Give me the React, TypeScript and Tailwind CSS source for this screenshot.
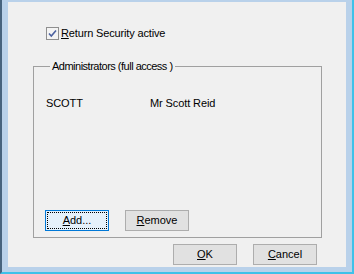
import React from 'react'

const font = { fontFamily: '"Liberation Sans", Arial, sans-serif' }

function Button({
    children,
    focused = false,
    className = '',
}: {
    children: React.ReactNode
    focused?: boolean
    className?: string
}) {
    return (
        <button
            className={`relative flex h-[21px] w-[64px] items-center justify-center border text-[11px] leading-[13px] text-black ${
                focused ? 'border-[#0078d7] bg-[#e5f1fb]' : 'border-[#adadad] bg-[#e1e1e1]'
            } ${className}`}
        >
            {focused && <span className="absolute inset-[1px] border border-dotted border-black"></span>}
            <span className="relative">{children}</span>
        </button>
    )
}

export default function App() {
    return (
        <div
            style={font}
            className="h-[274px] w-[354px] border-b-2 border-l-2 border-r-2 border-b-[#3fc1e9] border-l-[#47637e] border-r-[#3fc1e9] bg-[#b9d1ea] pb-[5px] pl-[6px] pr-[6px] pt-[2px]"
        >
            <div className="flex h-full flex-col bg-[#f0f0f0] text-[11px] leading-[13px] text-black">
                <div className="ml-[38px] mt-[25px] flex items-center gap-[2px]">
                    <span className="flex h-[13px] w-[13px] items-center justify-center border border-[#8f8f8f] bg-[#f4f4f4]">
                        <svg width="9" height="9" viewBox="0 0 9 9">
                            <path d="M1 4.5 L3.3 7 L8 1.5" fill="none" stroke="#4c62a0" strokeWidth="1.6" />
                        </svg>
                    </span>
                    <span className="tracking-[-0.15px]">
                        <span className="underline">R</span>eturn Security active
                    </span>
                </div>

                <fieldset className="ml-[25px] mt-[19px] w-[289px] border border-[#a0a0a0] px-[11px] pb-[6px]">
                    <legend className="ml-[5px] px-[2px] leading-[14px] tracking-[-0.5px]">
                        Administrators (full access )
                    </legend>
                    <div className="ml-[1px] mt-[24px] flex tracking-[-0.1px]">
                        <span className="w-[104px]">SCOTT</span>
                        <span>Mr Scott Reid</span>
                    </div>
                    <div className="mt-[100px] flex gap-[16px]">
                        <Button focused>
                            <span className="underline">A</span>dd...
                        </Button>
                        <Button>
                            <span className="underline">R</span>emove
                        </Button>
                    </div>
                </fieldset>

                <div className="ml-[165px] mt-[6px] flex gap-[16px]">
                    <Button>
                        <span className="underline">O</span>K
                    </Button>
                    <Button>
                        <span className="underline">C</span>ancel
                    </Button>
                </div>
            </div>
        </div>
    )
}
